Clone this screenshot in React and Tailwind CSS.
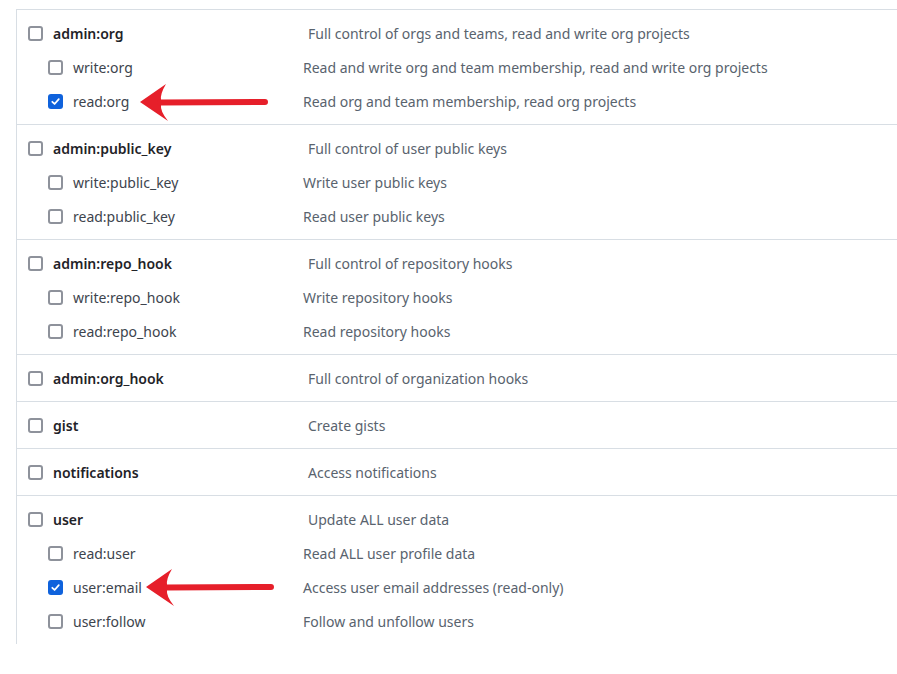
import React from "react";

const groups = [
  {
    name: "admin:org",
    desc: "Full control of orgs and teams, read and write org projects",
    children: [
      { name: "write:org", desc: "Read and write org and team membership, read and write org projects" },
      { name: "read:org", desc: "Read org and team membership, read org projects", checked: true },
    ],
  },
  {
    name: "admin:public_key",
    desc: "Full control of user public keys",
    children: [
      { name: "write:public_key", desc: "Write user public keys" },
      { name: "read:public_key", desc: "Read user public keys" },
    ],
  },
  {
    name: "admin:repo_hook",
    desc: "Full control of repository hooks",
    children: [
      { name: "write:repo_hook", desc: "Write repository hooks" },
      { name: "read:repo_hook", desc: "Read repository hooks" },
    ],
  },
  { name: "admin:org_hook", desc: "Full control of organization hooks", children: [] },
  { name: "gist", desc: "Create gists", children: [] },
  { name: "notifications", desc: "Access notifications", children: [] },
  {
    name: "user",
    desc: "Update ALL user data",
    children: [
      { name: "read:user", desc: "Read ALL user profile data" },
      { name: "user:email", desc: "Access user email addresses (read-only)", checked: true },
      { name: "user:follow", desc: "Follow and unfollow users" },
    ],
  },
];

function Checkbox({ checked }) {
  if (checked) {
    return (
      <span className="flex h-[15px] w-[15px] shrink-0 items-center justify-center rounded-[3px] bg-[#0f62dc]">
        <svg width="11" height="11" viewBox="0 0 12 12" fill="none">
          <path d="M2.5 6.3 L5 8.7 L9.6 3.4" stroke="white" strokeWidth="1.9" strokeLinecap="round" strokeLinejoin="round" />
        </svg>
      </span>
    );
  }
  return <span className="h-[15px] w-[15px] shrink-0 rounded-[3px] border-2 border-[#8e929b] bg-white" />;
}

function Arrow({ className }) {
  return (
    <svg className={className} width="134" height="40" viewBox="0 0 134 40" fill="none">
      <path d="M0 19 L26 1 Q20 11 21 17 L21 22 Q20 28 28 38 Z" fill="#e61f2a" />
      <path d="M20 19.5 L125 19" stroke="#e61f2a" strokeWidth="6" strokeLinecap="round" />
    </svg>
  );
}

export default function App() {
  return (
    <div className="relative h-[674px] w-[897px] bg-white pt-[9px] pl-4 font-['Noto_Sans',sans-serif] text-[14px]">
      <div className="border-l border-t border-[#d8dee4]">
        {groups.map((g, i) => (
          <div
            key={g.name}
            className={`pt-[6px] pb-[6px] ${i < groups.length - 1 ? "border-b border-[#d8dee4]" : ""}`}
          >
            <div className="flex h-[34px] items-center pl-[11px]">
              <div className="flex w-[280px] items-center gap-[10px]">
                <Checkbox />
                <span className="font-semibold text-[#1f2328]">{g.name}</span>
              </div>
              <span className="text-[#59636e]">{g.desc}</span>
            </div>
            {g.children.map((c) => (
              <div key={c.name} className="flex h-[34px] items-center pl-[31px]">
                <div className="flex w-[255px] items-center gap-[10px]">
                  <Checkbox checked={c.checked} />
                  <span className="text-[#3d444d]">{c.name}</span>
                </div>
                <span className="text-[#59636e]">{c.desc}</span>
              </div>
            ))}
          </div>
        ))}
      </div>
      <Arrow className="absolute left-[140px] top-[83px]" />
      <Arrow className="absolute left-[146px] top-[568px]" />
    </div>
  );
}
